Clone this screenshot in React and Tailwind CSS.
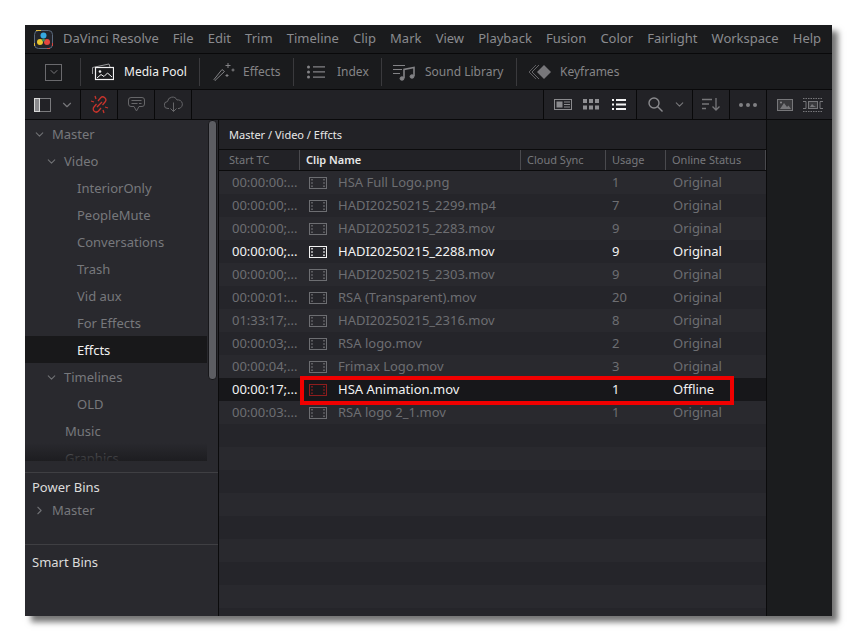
import { ChevronDown, ChevronRight } from 'lucide-react';

const menus = ['File', 'Edit', 'Trim', 'Timeline', 'Clip', 'Mark', 'View', 'Playback', 'Fusion', 'Color', 'Fairlight', 'Workspace', 'Help'];

const bins = [
  { name: 'Master', indent: 'pl-[8px]', chevron: true },
  { name: 'Video', indent: 'pl-[20px]', chevron: true },
  { name: 'InteriorOnly', indent: 'pl-[52px]' },
  { name: 'PeopleMute', indent: 'pl-[52px]' },
  { name: 'Conversations', indent: 'pl-[52px]' },
  { name: 'Trash', indent: 'pl-[52px]' },
  { name: 'Vid aux', indent: 'pl-[52px]' },
  { name: 'For Effects', indent: 'pl-[52px]' },
  { name: 'Effcts', indent: 'pl-[52px]', active: true },
  { name: 'Timelines', indent: 'pl-[20px]', chevron: true },
  { name: 'OLD', indent: 'pl-[52px]' },
  { name: 'Music', indent: 'pl-[40px]' },
  { name: 'Graphics', indent: 'pl-[40px]' },
];

const clips = [
  ['00:00:00:...', 'HSA Full Logo.png', '1', 'Original'],
  ['00:00:00;...', 'HADI20250215_2299.mp4', '7', 'Original'],
  ['00:00:00;...', 'HADI20250215_2283.mov', '9', 'Original'],
  ['00:00:00;...', 'HADI20250215_2288.mov', '9', 'Original', 'selected'],
  ['00:00:00;...', 'HADI20250215_2303.mov', '9', 'Original'],
  ['00:00:01:...', 'RSA (Transparent).mov', '20', 'Original'],
  ['01:33:17;...', 'HADI20250215_2316.mov', '8', 'Original'],
  ['00:00:03;...', 'RSA logo.mov', '2', 'Original'],
  ['00:00:04;...', 'Frimax Logo.mov', '3', 'Original'],
  ['00:00:17;...', 'HSA Animation.mov', '1', 'Offline', 'offline'],
  ['00:00:03:...', 'RSA logo 2_1.mov', '1', 'Original'],
];

const FilmIcon = ({ className }) => (
  <svg width="18" height="12" viewBox="0 0 18 12" fill="none" className={className}>
    <rect x="0.5" y="0.5" width="17" height="11" stroke="currentColor" />
    <path d="M2 2h2v1.500H2zM2 5.250h2v1.500H2zM2 8.500h2V10H2zM14 2h2v1.500h-2zM14 5.250h2v1.500h-2zM14 8.500h2V10h-2z" fill="currentColor" opacity="0.75" />
  </svg>
);

const ResolveLogo = () => (
  <svg width="19" height="19" viewBox="0 0 19 19" fill="none">
    <rect x="0.5" y="0.5" width="18" height="18" rx="4" fill="#23242a" stroke="#5b6a7d" />
    <path d="M2 0.500h5M0.500 13v3" stroke="#e2b93b" />
    <path d="M13 18.500h3M18.500 13v3" stroke="#d8443f" />
    <circle cx="9.500" cy="5.500" r="3" fill="#35a8e0" />
    <circle cx="6" cy="12" r="3" fill="#e9c62f" />
    <circle cx="13" cy="12" r="3" fill="#e4473f" />
    <circle cx="9.500" cy="10" r="1.600" fill="#3f8f5a" />
  </svg>
);

const MediaPoolIcon = () => (
  <svg width="22" height="18" viewBox="0 0 22 18" fill="none">
    <path d="M0.500 11V4.500L17 1l1 3" stroke="#9a9a9c" />
    <rect x="3.500" y="4.500" width="18" height="12" stroke="#f2f2f2" strokeWidth="1.200" />
    <circle cx="8" cy="8.500" r="1.300" fill="#f2f2f2" />
    <path d="M5 15l4-3.500 3 2 3.500-3.500 4.500 4" stroke="#f2f2f2" />
  </svg>
);

const EffectsIcon = () => (
  <svg width="22" height="20" viewBox="0 0 22 20" fill="none" stroke="#838386">
    <path d="M2 18.500l-1-1L9 7.500l2.500 2z" />
    <path d="M15 1v5M12.500 3.500h5M20 6.500v3M18.500 8h3M14 12v3M12.500 13.500h3" />
  </svg>
);

const IndexIcon = () => (
  <svg width="18" height="14" viewBox="0 0 18 14" fill="#838386">
    <circle cx="1.500" cy="2" r="1.500" />
    <circle cx="1.500" cy="7" r="1.500" />
    <circle cx="1.500" cy="12" r="1.500" />
    <path d="M6 1.200h12v1.300H6zM6 6.300h12v1.300H6zM6 11.400h12v1.300H6z" />
  </svg>
);

const SoundIcon = () => (
  <svg width="23" height="17" viewBox="0 0 23 17" fill="none" stroke="#838386">
    <path d="M0 1.500h12M0 5.500h9M0 9.500h7" />
    <path d="M11 14V5.500l10-2V12" strokeWidth="1.600" />
    <ellipse cx="9" cy="14.500" rx="2" ry="1.700" fill="#838386" />
    <ellipse cx="19" cy="12.500" rx="2" ry="1.700" fill="#838386" />
  </svg>
);

const KeyframesIcon = () => (
  <svg width="24" height="16" viewBox="0 0 24 16" fill="none">
    <path d="M8 1L1 8l7 7" stroke="#5d5d60" />
    <path d="M11 1L4 8l7 7" stroke="#68686b" />
    <path d="M16 1l7 7-7 7-7-7z" fill="#77777a" />
  </svg>
);

const PanelIcon = () => (
  <svg width="17" height="14" viewBox="0 0 17 14" fill="none">
    <rect x="0.500" y="0.500" width="16" height="13" stroke="#7a7a7d" />
    <rect x="0.500" y="0.500" width="5" height="13" fill="#8a8a8d" stroke="#d8d8d8" />
  </svg>
);

const BrokenLinkIcon = () => (
  <svg width="19" height="19" viewBox="0 0 19 19" fill="none" stroke="#c9342c" strokeWidth="1.300">
    <path d="M8 6l2.500-3a3 3 0 0 1 4.500 4l-2.500 3" />
    <path d="M11 13l-2.500 3a3 3 0 0 1-4.500-4l2.500-3" />
    <path d="M7 12l5-5M1 6l3 1M5 1l1 3M18 13l-3-1M14 18l-1-3" />
  </svg>
);

const CommentIcon = () => (
  <svg width="17" height="15" viewBox="0 0 17 15" fill="none" stroke="#666669">
    <path d="M3 0.500h11a2.500 2.500 0 0 1 2.500 2.500v4a2.500 2.500 0 0 1-2.500 2.500h-3L8.500 14 6 9.500H3A2.500 2.500 0 0 1 0.500 7V3A2.500 2.500 0 0 1 3 0.500z" />
    <path d="M3.500 3.500h10M3.500 6.500h6M11 6.500h2.500" />
  </svg>
);

const CloudIcon = () => (
  <svg width="19" height="17" viewBox="0 0 19 17" fill="none" stroke="#666669">
    <path d="M5 12.500H4a3.500 3.500 0 0 1-.5-7A5 5 0 0 1 13 4a4.300 4.300 0 0 1 2 8.500h-1" />
    <path d="M9.500 6.500v9M6.500 12.500l3 3 3-3" />
  </svg>
);

const StripViewIcon = () => (
  <svg width="18" height="11" viewBox="0 0 18 11" fill="none">
    <rect x="0.500" y="0.500" width="17" height="10" stroke="#8a8a8d" />
    <rect x="2.500" y="2.500" width="6" height="6" fill="#8a8a8d" />
    <path d="M10 3h6M10 5.500h6M10 8h6" stroke="#8a8a8d" />
  </svg>
);

const GridViewIcon = () => (
  <svg width="16" height="11" viewBox="0 0 16 11" fill="#8f8f92">
    <path d="M0 0h4v4H0zM6 0h4v4H6zM12 0h4v4h-4zM0 6.500h4v4H0zM6 6.500h4v4H6zM12 6.500h4v4h-4z" />
  </svg>
);

const ListViewIcon = () => (
  <svg width="14" height="11" viewBox="0 0 14 11" fill="#f4f4f4">
    <path d="M0 0h2v2H0zM0 4.500h2v2H0zM0 9h2v2H0zM4 0h10v2H4zM4 4.500h10v2H4zM4 9h10v2H4z" />
  </svg>
);

const SearchIcon = () => (
  <svg width="15" height="15" viewBox="0 0 15 15" fill="none" stroke="#8a8a8d" strokeWidth="1.400">
    <circle cx="6" cy="6" r="5" />
    <path d="M9.500 9.500l5 5" />
  </svg>
);

const SortIcon = () => (
  <svg width="18" height="13" viewBox="0 0 18 13" fill="none" stroke="#77777a" strokeWidth="1.300">
    <path d="M0 1.500h10M0 6h7M0 10.500h4" />
    <path d="M14 0v12M10.500 8.500L14 12l3.500-3.500" />
  </svg>
);

const ThumbIcon = () => (
  <svg width="16" height="12" viewBox="0 0 16 12" fill="none">
    <rect x="0.500" y="0.500" width="15" height="11" stroke="#77777a" fill="#3a3a3d" />
    <circle cx="4" cy="3.500" r="1" fill="#8a8a8d" />
    <path d="M3 10l4-6 3 4 1.500-1.500L14 10z" fill="#77777a" />
  </svg>
);

const ThumbStripIcon = () => (
  <svg width="20" height="14" viewBox="0 0 20 14" fill="none" stroke="#77777a">
    <path d="M0 0.500h20M0 13.500h20" strokeDasharray="1.500 1" />
    <rect x="5.500" y="3.500" width="9" height="7" fill="#3a3a3d" />
    <path d="M7 9l2-3 2 2 2 1z" fill="#77777a" stroke="none" />
    <path d="M0 3.500h3v7H0M20 3.500h-3v7h3" />
  </svg>
);

const Tab = ({ icon, label, active, className = '' }) => (
  <div className={`flex items-center h-[28px] border-r border-[#3a3a3d] text-[12px] whitespace-nowrap ${className}`}>
    {icon}
    <span className={active ? 'text-[#f0f0f0]' : 'text-[#858587]'}>{label}</span>
  </div>
);

const Sidebar = () => (
  <aside className="w-[194px] shrink-0 flex flex-col border-r border-[#0b0b0c]">
    <div className="relative h-[341px] shrink-0 overflow-hidden flex">
      <div className="w-[182px] shrink-0">
        {bins.map((bin) => (
          <div
            key={bin.name}
            className={`h-[27px] pt-[2px] flex items-center ${bin.indent} ${bin.active ? 'bg-[#18181a] text-[#f0f0f0]' : 'text-[#77787c]'}`}
          >
            {bin.chevron && <ChevronDown size={13} className="mr-[6px] text-[#6f7074]" />}
            {bin.name}
          </div>
        ))}
      </div>
      <div className="w-[9px] ml-[1px] h-[260px] rounded-[4px] bg-[#5c5d62] border border-[#17171a]" />
      {/* fade over the clipped last bin */}
      <div className="absolute left-0 bottom-0 w-[182px] h-[18px] bg-gradient-to-b from-[#1a1a1d00] to-[#1a1a1dcc]" />
    </div>
    <div className="h-[73px] shrink-0 mt-[11px] border-y border-[#3f3f43] pt-[4px]">
      <div className="pl-[7px] h-[20px] leading-[20px] text-[#dcdcdc]">Power Bins</div>
      <div className="pl-[8px] mt-[2px] h-[23px] flex items-center text-[#77787c]">
        <ChevronRight size={13} className="mr-[6px] text-[#6f7074]" />
        Master
      </div>
    </div>
    <div className="pl-[7px] pt-[7px] flex-1 leading-[20px] text-[#dcdcdc]">Smart Bins</div>
  </aside>
);

const ClipRow = ({ clip, index }) => {
  const [tc, name, usage, status, state] = clip;
  const bright = state === 'selected' || state === 'offline';
  return (
    <div
      className={`relative h-[23px] shrink-0 flex items-center ${bright ? 'text-[#f2f2f2]' : 'text-[#6d6e72]'} ${state === 'offline' ? 'bg-[#17171a]' : index % 2 === 0 ? 'bg-[#29292e]' : 'bg-[#25252a]'}`}
    >
      <span className="w-[90px] shrink-0 pl-[13px] whitespace-nowrap">{tc}</span>
      <FilmIcon className={`shrink-0 ${state === 'selected' ? 'text-[#f2f2f2]' : state === 'offline' ? 'text-[#8e1d1d]' : 'text-[#6d6e72]'}`} />
      <span className="w-[285px] shrink-0 pl-[11px] whitespace-nowrap">{name}</span>
      <span className="w-[61px] shrink-0">{usage}</span>
      <span>{status}</span>
    </div>
  );
};

export default function App() {
  const filler = Array.from({ length: 9 });
  return (
    <div className="h-[641px] w-[857px] bg-white p-[25px] text-[13px] font-['Noto_Sans','Open_Sans',sans-serif] overflow-hidden">
      <div className="w-[807px] h-[591px] flex flex-col bg-[#29292e] shadow-[6px_6px_6px_rgba(0,0,0,0.55)]">
        {/* Menu bar */}
        <div className="h-[29px] shrink-0 flex items-center bg-[#1a1b1d] border-b border-[#09090a] pl-[9px] text-[#8a8b8f] whitespace-nowrap">
          <ResolveLogo />
          <span className="ml-[10px] mr-[14px]">DaVinci Resolve</span>
          <div className="flex gap-[14.15px]">
            {menus.map((m) => (
              <span key={m}>{m}</span>
            ))}
          </div>
        </div>

        {/* Page tabs */}
        <div className="h-[36px] shrink-0 flex items-center pt-[1px] bg-[#1a1b1d] border-b border-[#09090a]">
          <div className="w-[56px] h-[28px] flex items-center pl-[20px] border-r border-[#3a3a3d]">
            <div className="w-[17px] h-[17px] border border-[#6a6a6d] flex items-center justify-center">
              <ChevronDown size={12} className="text-[#77777a]" />
            </div>
          </div>
          <Tab icon={<span className="ml-[11px] mr-[10px] flex"><MediaPoolIcon /></span>} label="Media Pool" active className="w-[119px]" />
          <Tab icon={<span className="ml-[13px] mr-[8px] flex"><EffectsIcon /></span>} label="Effects" className="w-[94px]" />
          <Tab icon={<span className="ml-[13px] mr-[12px] flex"><IndexIcon /></span>} label="Index" className="w-[88px]" />
          <Tab icon={<span className="ml-[11px] mr-[9px] flex"><SoundIcon /></span>} label="Sound Library" className="w-[135px]" />
          <div className="flex items-center text-[12px]">
            <span className="ml-[11px] mr-[8px] flex"><KeyframesIcon /></span>
            <span className="text-[#858587]">Keyframes</span>
          </div>
        </div>

        {/* Bin toolbar */}
        <div className="h-[30px] shrink-0 flex items-center bg-[#222226] border-b border-[#09090a]">
          <div className="w-[56px] h-full flex items-center pl-[9px] border-r border-[#09090a]">
            <PanelIcon />
            <ChevronDown size={14} className="ml-[9px] text-[#77777a]" />
          </div>
          <div className="w-[37px] h-full flex items-center justify-center border-r border-[#09090a]"><BrokenLinkIcon /></div>
          <div className="w-[37px] h-full flex items-center justify-center border-r border-[#09090a]"><CommentIcon /></div>
          <div className="w-[37px] h-full flex items-center justify-center border-r border-[#09090a]"><CloudIcon /></div>
          <div className="flex-1" />
          <div className="w-[94px] h-full flex items-center gap-[11px] pl-[10px] border-x border-[#09090a]">
            <StripViewIcon />
            <GridViewIcon />
            <span className="flex ml-[2px]"><ListViewIcon /></span>
          </div>
          <div className="w-[56px] h-full flex items-center pl-[11px] border-r border-[#09090a]">
            <SearchIcon />
            <ChevronDown size={13} className="ml-[10px] text-[#77777a]" />
          </div>
          <div className="w-[37px] h-full flex items-center justify-center border-r border-[#09090a]"><SortIcon /></div>
          <div className="w-[37px] h-full flex items-center justify-center gap-[3px] border-r border-[#09090a]">
            <span className="w-[4px] h-[4px] rounded-full bg-[#808083]" />
            <span className="w-[4px] h-[4px] rounded-full bg-[#808083]" />
            <span className="w-[4px] h-[4px] rounded-full bg-[#808083]" />
          </div>
          <div className="w-[65px] h-full flex items-center gap-[10px] pl-[10px]">
            <ThumbIcon />
            <ThumbStripIcon />
          </div>
        </div>

        <div className="flex-1 flex min-h-0">
          <Sidebar />

          {/* Clip list */}
          <main className="relative w-[548px] shrink-0 flex flex-col overflow-hidden border-r border-[#0b0b0c]">
            <div className="h-[30px] shrink-0 flex items-center pl-[10px] pt-[1px] bg-[#222226] border-b border-[#0b0b0c] text-[11px] text-[#e8e8e8]">
              Master / Video / Effcts
            </div>
            <div className="h-[21px] shrink-0 flex items-center bg-[#222226] border-b border-[#0b0b0c] text-[11px] text-[#77787c]">
              <span className="w-[81px] h-full flex items-center pl-[10px] border-r border-[#4a4a4e]">Start TC</span>
              <span className="w-[221px] h-full flex items-center pl-[6px] border-r border-[#4a4a4e] font-semibold text-[#e8e8e8]">Clip Name</span>
              <span className="w-[85px] h-full flex items-center pl-[6px] border-r border-[#4a4a4e]">Cloud Sync</span>
              <span className="w-[60px] h-full flex items-center pl-[6px] border-r border-[#4a4a4e]">Usage</span>
              <span className="w-[100px] h-full flex items-center pl-[6px] border-r border-[#4a4a4e]">Online Status</span>
            </div>
            {clips.map((clip, i) => (
              <ClipRow key={clip[1]} clip={clip} index={i} />
            ))}
            {filler.map((_, i) => (
              <div key={i} className={`h-[23px] shrink-0 ${i % 2 === 0 ? 'bg-[#25252a]' : 'bg-[#29292e]'}`} />
            ))}
            {/* red annotation around the offline clip */}
            <div className="absolute left-[81px] top-[256px] w-[434px] h-[29px] border-[4px] border-[#f00000]" />
          </main>

          <div className="flex-1 bg-[#1b1c1e]" />
        </div>
      </div>
    </div>
  );
}
